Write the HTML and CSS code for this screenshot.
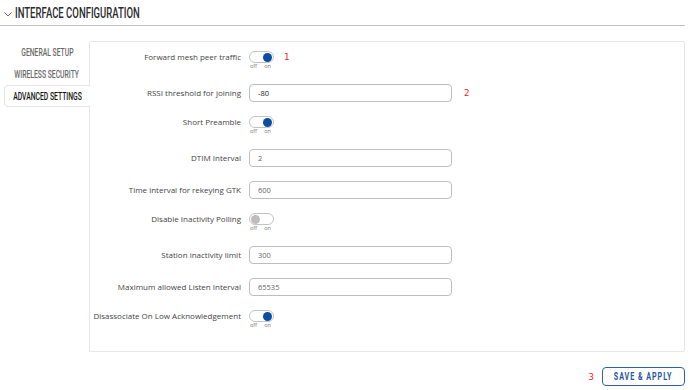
FILE: index.html
```html
<!DOCTYPE html>
<html lang="en">
<head>
    <meta charset="UTF-8">
    <title>Interface Configuration</title>
    <link rel="stylesheet" href="styles.css">
</head>
<body>
    <div class="section">
        <div class="section-title">
            <svg class="chevron" width="8" height="5" viewBox="0 0 8 5"><path d="M0.5 0.5 L4 4 L7.5 0.5" fill="none" stroke="#666" stroke-width="1"/></svg>
            <span class="cond title-text">INTERFACE CONFIGURATION</span>
        </div>

        <div class="config">
            <div class="tabs">
                <div class="tab"><span class="cond">GENERAL SETUP</span></div>
                <div class="tab"><span class="cond">WIRELESS SECURITY</span></div>
                <div class="tab active"><span class="cond">ADVANCED SETTINGS</span></div>
            </div>

            <div class="panel">
                <div class="row switch-row">
                    <div class="label">Forward mesh peer traffic</div>
                    <div class="switch on"><span class="track"><span class="knob"></span></span><span class="states"><span>off</span><span>on</span></span></div>
                    <span class="note">1</span>
                </div>
                <div class="row">
                    <div class="label">RSSI threshold for joining</div>
                    <input class="field dark" type="text" value="-80">
                    <span class="note">2</span>
                </div>
                <div class="row switch-row">
                    <div class="label">Short Preamble</div>
                    <div class="switch on"><span class="track"><span class="knob"></span></span><span class="states"><span>off</span><span>on</span></span></div>
                </div>
                <div class="row">
                    <div class="label">DTIM Interval</div>
                    <input class="field" type="text" value="2">
                </div>
                <div class="row">
                    <div class="label">Time interval for rekeying GTK</div>
                    <input class="field" type="text" value="600">
                </div>
                <div class="row switch-row">
                    <div class="label">Disable Inactivity Polling</div>
                    <div class="switch"><span class="track"><span class="knob"></span></span><span class="states"><span>off</span><span>on</span></span></div>
                </div>
                <div class="row">
                    <div class="label">Station inactivity limit</div>
                    <input class="field" type="text" value="300">
                </div>
                <div class="row">
                    <div class="label">Maximum allowed Listen Interval</div>
                    <input class="field" type="text" value="65535">
                </div>
                <div class="row switch-row">
                    <div class="label">Disassociate On Low Acknowledgement</div>
                    <div class="switch on"><span class="track"><span class="knob"></span></span><span class="states"><span>off</span><span>on</span></span></div>
                </div>
            </div>
        </div>

        <div class="actions">
            <span class="note">3</span>
            <button class="button"><span class="cond">SAVE &amp; APPLY</span></button>
        </div>
    </div>
</body>
</html>
```

FILE: styles.css
```css
body {
    margin: 0;
    background: #fff;
    font-family: 'Open Sans', sans-serif;
    color: #555;
}

.section {
    width: 685px;
}

/* narrow caps, the page uses an Oswald-like face */
.cond {
    display: inline-block;
    white-space: nowrap;
    font-family: 'Roboto', 'Liberation Sans', sans-serif;
    font-weight: 500;
    transform: scaleX(0.68);
}

.section-title {
    display: flex;
    align-items: center;
    gap: 3px;
    height: 26px;
    padding-left: 4px;
    border-bottom: 1px solid #c2c2c2;
    box-sizing: border-box;
    font-size: 14px;
    color: #2b2b2b;
}

.title-text {
    transform-origin: left center;
}

.chevron {
    margin-top: 3px;
}

.config {
    display: flex;
    margin-top: 15px;
    padding-left: 4px;
}

.tabs {
    width: 86px;
    flex-shrink: 0;
    position: relative;
    z-index: 1;
    margin-right: -1px;
}

.tab {
    display: flex;
    justify-content: center;
    align-items: center;
    height: 22px;
    font-size: 10px;
    color: #6a6a6a;
    box-sizing: border-box;
}

.tab.active {
    background: #fff;
    color: #111;
    border: 1px solid #e6e6e6;
    border-right: none;
    border-radius: 4px 0 0 4px;
}

.panel {
    flex: 1;
    border: 1px solid #e6e6e6;
    border-radius: 2px;
    padding: 9px 0 22px;
    display: flex;
    flex-direction: column;
    gap: 14px;
}

.row {
    display: flex;
    align-items: flex-start;
}

.label {
    width: 151px;
    flex-shrink: 0;
    margin-right: 8px;
    text-align: right;
    font-size: 8px;
    line-height: 18px;
    color: #444;
    white-space: nowrap;
}

.switch-row .label {
    line-height: 12px;
}

.field {
    width: 203px;
    height: 18px;
    box-sizing: border-box;
    border: 1px solid #bdbdbd;
    border-radius: 4px;
    padding: 0 8px;
    font-family: 'Open Sans', sans-serif;
    font-size: 7.5px;
    color: #666;
    margin: 0;
}

.field.dark {
    color: #222;
}

.switch {
    display: flex;
    flex-direction: column;
    width: 25px;
    height: 19px;
}

.track {
    display: flex;
    align-items: center;
    width: 25px;
    height: 12px;
    box-sizing: border-box;
    border: 1px solid #c4c4c4;
    border-radius: 6px;
    padding: 0 1px;
    background: #fff;
}

.knob {
    width: 9px;
    height: 9px;
    border-radius: 50%;
    background: #bdbdbd;
}

.switch.on .knob {
    margin-left: auto;
    background: #0b4ea2;
}

.states {
    display: flex;
    justify-content: space-between;
    padding: 0 3px 0 1px;
    font-size: 5.5px;
    line-height: 7px;
    color: #777;
}

.note {
    color: #ee1c1c;
    font-family: 'DejaVu Sans Mono', monospace;
    font-size: 9px;
    line-height: 12px;
    margin-left: 10px;
}

.row .field + .note {
    line-height: 18px;
    margin-left: 12px;
}

.actions {
    display: flex;
    justify-content: flex-end;
    align-items: center;
    margin-top: 15px;
}

.actions .note {
    margin: 0 8px 0 0;
}

.button {
    display: flex;
    justify-content: center;
    align-items: center;
    width: 83px;
    height: 19px;
    background: #fff;
    border: 1.5px solid #2b62ab;
    border-radius: 4px;
    color: #1f56a3;
    font-size: 10.5px;
    letter-spacing: 1.4px;
    padding: 0;
    cursor: pointer;
}

.button .cond {
    font-weight: bold;
}
```
